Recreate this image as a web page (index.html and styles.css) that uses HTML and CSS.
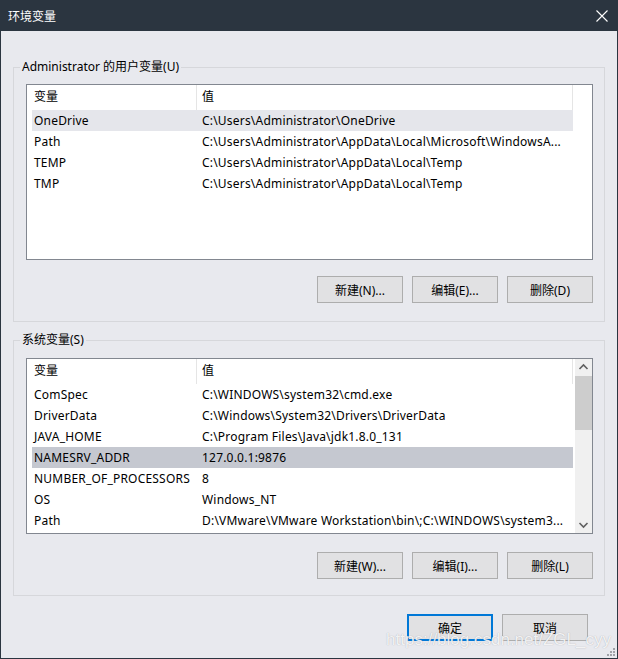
FILE: index.html
```html
<!DOCTYPE html>
<html lang="zh-CN">
<head>
    <meta charset="UTF-8">
    <title>环境变量</title>
    <link rel="stylesheet" href="styles.css">
</head>
<body>
    <div class="envDlg">
        <div class="envDlg_title">
            <span>环境变量</span>
            <svg class="envDlg_close" width="12" height="12" viewBox="0 0 12 12">
                <path d="M0.5 0.5 L11.5 11.5 M11.5 0.5 L0.5 11.5" stroke="#ffffff" stroke-width="1.1" fill="none"/>
            </svg>
        </div>
        <div class="envDlg_body">
            <fieldset class="envGroup">
                <legend>Administrator 的用户变量(U)</legend>
                <div class="envList">
                    <div class="envList_main">
                        <div class="envList_head">
                            <span class="envList_hname">变量</span>
                            <span class="envList_hval">值</span>
                        </div>
                        <ul class="envList_rows">
                            <li class="envList_row envList_soft"><span>OneDrive</span><span>C:\Users\Administrator\OneDrive</span></li>
                            <li class="envList_row"><span>Path</span><span>C:\Users\Administrator\AppData\Local\Microsoft\WindowsA...</span></li>
                            <li class="envList_row"><span>TEMP</span><span>C:\Users\Administrator\AppData\Local\Temp</span></li>
                            <li class="envList_row"><span>TMP</span><span>C:\Users\Administrator\AppData\Local\Temp</span></li>
                        </ul>
                    </div>
                </div>
                <div class="envBtns">
                    <button class="envBtn">新建(N)...</button>
                    <button class="envBtn">编辑(E)...</button>
                    <button class="envBtn">删除(D)</button>
                </div>
            </fieldset>

            <fieldset class="envGroup envGroup_sys">
                <legend>系统变量(S)</legend>
                <div class="envList">
                    <div class="envList_main">
                        <div class="envList_head">
                            <span class="envList_hname">变量</span>
                            <span class="envList_hval">值</span>
                        </div>
                        <ul class="envList_rows">
                            <li class="envList_row"><span>ComSpec</span><span>C:\WINDOWS\system32\cmd.exe</span></li>
                            <li class="envList_row"><span>DriverData</span><span>C:\Windows\System32\Drivers\DriverData</span></li>
                            <li class="envList_row"><span>JAVA_HOME</span><span>C:\Program Files\Java\jdk1.8.0_131</span></li>
                            <li class="envList_row envList_sel"><span>NAMESRV_ADDR</span><span>127.0.0.1:9876</span></li>
                            <li class="envList_row"><span>NUMBER_OF_PROCESSORS</span><span>8</span></li>
                            <li class="envList_row"><span>OS</span><span>Windows_NT</span></li>
                            <li class="envList_row"><span>Path</span><span>D:\VMware\VMware Workstation\bin\;C:\WINDOWS\system3...</span></li>
                        </ul>
                    </div>
                    <div class="envScroll">
                        <svg class="envScroll_arrow" width="17" height="17" viewBox="0 0 17 17">
                            <path d="M4.5 10 L8.5 6 L12.5 10" stroke="#606060" stroke-width="1.6" fill="none"/>
                        </svg>
                        <div class="envScroll_thumb"></div>
                        <div class="envScroll_track"></div>
                        <svg class="envScroll_arrow" width="17" height="17" viewBox="0 0 17 17">
                            <path d="M4.5 7 L8.5 11 L12.5 7" stroke="#606060" stroke-width="1.6" fill="none"/>
                        </svg>
                    </div>
                </div>
                <div class="envBtns">
                    <button class="envBtn">新建(W)...</button>
                    <button class="envBtn">编辑(I)...</button>
                    <button class="envBtn">删除(L)</button>
                </div>
            </fieldset>

            <div class="envDlg_foot">
                <button class="envBtn envBtn_ok">确定</button>
                <button class="envBtn">取消</button>
            </div>
        </div>
        <div class="envDlg_mark">https://blog.csdn.net/ZGL_cyy</div>
        <svg class="envDlg_grip" width="10" height="10" viewBox="0 0 10 10">
            <rect x="7" y="1" width="2" height="2" fill="#a0a2a8"/>
            <rect x="4" y="4" width="2" height="2" fill="#a0a2a8"/>
            <rect x="7" y="4" width="2" height="2" fill="#a0a2a8"/>
            <rect x="1" y="7" width="2" height="2" fill="#a0a2a8"/>
            <rect x="4" y="7" width="2" height="2" fill="#a0a2a8"/>
            <rect x="7" y="7" width="2" height="2" fill="#a0a2a8"/>
        </svg>
    </div>
</body>
</html>
```

FILE: styles.css
```css
*{
    box-sizing: border-box;
}
body{
    margin: 0;
    font-family: "Noto Sans", "Noto Sans CJK SC", sans-serif;
    font-size: 12px;
    color: #000000;
}
.envDlg{
    position: relative;
    width: 618px;
    height: 659px;
    border: 1px solid #2b3540;
    border-top: none;
    background: #e8e9ee;
}
.envDlg_title{
    height: 31px;
    margin: 0 -1px;
    padding: 0 10px 0 8px;
    background: #2b3540;
    color: #ffffff;
    display: flex;
    align-items: center;
    justify-content: space-between;
}
.envDlg_body{
    padding: 28px 12px 0 12px;
}
.envGroup{
    margin: 0;
    padding: 9px 11px 18px 12px;
    border: 1px solid #d6d7db;
    min-width: 0;
}
.envGroup legend{
    margin-left: -6px;
    padding: 0 2px;
    line-height: 16px;
}
.envGroup_sys{
    margin-top: 10px;
    padding-top: 10px;
    padding-bottom: 16px;
}
.envList{
    display: flex;
    height: 176px;
    border: 1px solid #828790;
    background: #ffffff;
}
.envList_main{
    flex: 1;
    overflow: hidden;
}
.envList_head{
    display: flex;
    height: 25px;
    line-height: 24px;
}
.envList_hname{
    width: 169px;
    padding-left: 7px;
}
.envList_hval{
    width: 377px;
    padding-left: 5px;
    border-left: 1px solid #e5e5e5;
    border-right: 1px solid #e5e5e5;
}
.envList_rows{
    margin: 0;
    padding: 0;
    list-style: none;
}
.envList_row{
    display: flex;
    width: 541px;
    height: 21px;
    line-height: 21px;
    margin-left: 5px;
    white-space: nowrap;
    letter-spacing: 0.2px;
}
.envList_row span:first-child{
    width: 164px;
    padding-left: 2px;
}
.envList_row span:last-child{
    width: 377px;
    padding-left: 6px;
    overflow: hidden;
}
.envList_soft{
    background: #e5e6eb;
}
.envList_sel{
    background: #c5c8d0;
}
.envScroll{
    width: 17px;
    display: flex;
    flex-direction: column;
    background: #f0f0f0;
}
.envScroll_arrow{
    display: block;
    flex: none;
}
.envScroll_thumb{
    height: 54px;
    background: #cdcdcd;
}
.envScroll_track{
    flex: 1;
}
.envBtns{
    display: flex;
    justify-content: flex-end;
    gap: 9px;
    margin-top: 16px;
}
.envGroup_sys .envBtns{
    margin-top: 18px;
}
.envBtn{
    width: 86px;
    height: 27px;
    padding: 0;
    font-family: inherit;
    font-size: 12px;
    color: #000000;
    background: #e1e1e3;
    border: 1px solid #adadad;
}
.envBtn_ok{
    border: 2px solid #0078d7;
}
.envDlg_foot{
    display: flex;
    justify-content: flex-end;
    gap: 9px;
    margin-top: 18px;
    padding-right: 17px;
}
.envDlg_mark{
    position: absolute;
    right: 6px;
    bottom: 8px;
    font-family: "Liberation Sans", sans-serif;
    font-size: 17px;
    color: rgba(255, 255, 255, 0.85);
    text-shadow: 0 0 1px rgba(120, 120, 130, 0.6);
}
.envDlg_grip{
    position: absolute;
    right: 1px;
    bottom: 1px;
}
```
